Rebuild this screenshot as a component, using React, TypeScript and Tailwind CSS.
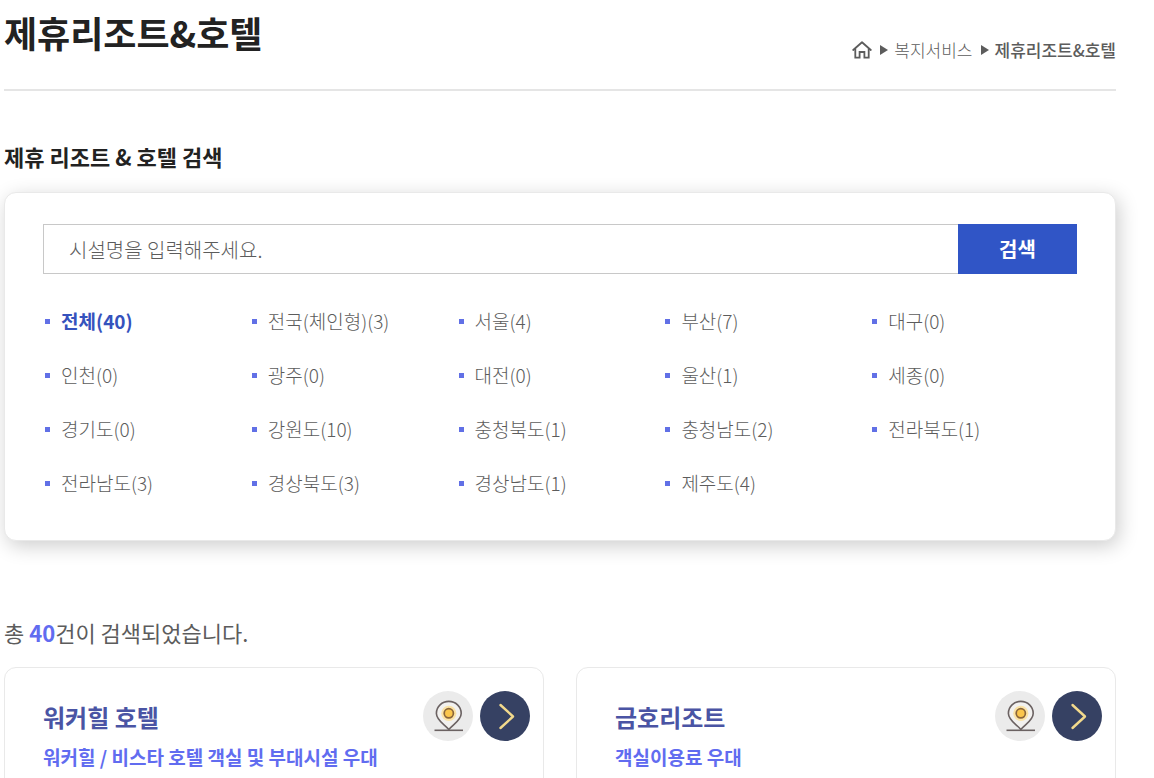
const regions = [
  { name: '전체', count: 40 },
  { name: '전국(체인형)', count: 3 },
  { name: '서울', count: 4 },
  { name: '부산', count: 7 },
  { name: '대구', count: 0 },
  { name: '인천', count: 0 },
  { name: '광주', count: 0 },
  { name: '대전', count: 0 },
  { name: '울산', count: 1 },
  { name: '세종', count: 0 },
  { name: '경기도', count: 0 },
  { name: '강원도', count: 10 },
  { name: '충청북도', count: 1 },
  { name: '충청남도', count: 2 },
  { name: '전라북도', count: 1 },
  { name: '전라남도', count: 3 },
  { name: '경상북도', count: 3 },
  { name: '경상남도', count: 1 },
  { name: '제주도', count: 4 },
];

const facilities = [
  { name: '워커힐 호텔', benefit: '워커힐 / 비스타 호텔 객실 및 부대시설 우대' },
  { name: '금호리조트', benefit: '객실이용료 우대' },
];

function HomeIcon() {
  return (
    <svg viewBox="0 0 20 18" className="h-[18px] w-5" fill="none" stroke="#5c5c5c" strokeWidth="1.8" strokeLinejoin="round" strokeLinecap="round">
      <path d="M1.2 9 L10 1.3 L18.8 9" />
      <path d="M3.3 7.8 V16.6 H7.6 V11 H12.4 V16.6 H16.7 V7.8" strokeLinejoin="miter" />
    </svg>
  );
}

function TriangleIcon() {
  return (
    <svg viewBox="0 0 8 10" className="h-[10px] w-2" fill="#5c5c5c">
      <path d="M0 0 L8 5 L0 10 Z" />
    </svg>
  );
}

function MapIcon() {
  return (
    <svg viewBox="0 0 50 50" className="size-[50px]" fill="none">
      <circle cx="25" cy="25" r="25" fill="#ebebeb" />
      <path d="M25.8 38.5 C22.5 34 13.4 29.5 13.4 22.4 A12.4 12 0 0 1 38.2 22.4 C38.2 29.5 29.1 34 25.8 38.5 Z" fill="#f2f1ef" stroke="#6b6262" strokeWidth="1.6" />
      <circle cx="25.8" cy="22.3" r="7.6" fill="#fbe3a6" />
      <circle cx="25.8" cy="22.3" r="4.6" fill="#fbc64c" stroke="#8a653a" strokeWidth="1.7" />
      <path d="M11.5 39.3 H40" stroke="#6b6262" strokeWidth="1.6" />
    </svg>
  );
}

function ArrowIcon() {
  return (
    <svg viewBox="0 0 50 50" className="size-[50px]" fill="none">
      <circle cx="25" cy="25" r="25" fill="#364163" />
      <path d="M20.5 14 L33 25.5 L20.5 37" stroke="#f2d98c" strokeWidth="2.4" strokeLinecap="round" strokeLinejoin="round" />
    </svg>
  );
}

export default function App() {
  return (
    <main className="h-screen overflow-hidden bg-white pr-[38px] pl-1 font-['Noto_Sans_CJK_KR','Noto_Sans',sans-serif] text-[#5c5c5c]">
      <header className="flex items-start justify-between border-b-2 border-[#e5e5e5] pt-1.5 pb-[27px]">
        <h1 className="text-[36px] leading-[52px] font-bold text-[#222]">제휴리조트&amp;호텔</h1>
        <nav aria-label="현재 위치" className="mt-8 flex items-center text-[17px] leading-6">
          <a href="#home" aria-label="홈"><HomeIcon /></a>
          <span className="mr-1.5 ml-2"><TriangleIcon /></span>
          <a href="#welfare" className="font-light">복지서비스</a>
          <span className="mr-1.5 ml-2"><TriangleIcon /></span>
          <a href="#resort" aria-current="page" className="font-medium">제휴리조트&amp;호텔</a>
        </nav>
      </header>

      <section>
        <h2 className="mt-[49px] text-[22px] leading-8 font-bold text-[#222]">제휴 리조트 &amp; 호텔 검색</h2>
        <div className="mt-5 rounded-[12px] border border-[#e9e9e9] bg-white px-[38px] pt-[31px] pb-[43px] shadow-[3px_5px_20px_rgba(0,0,0,0.2)]">
          <form className="flex" onSubmit={(e) => e.preventDefault()}>
            <input
              type="text"
              aria-label="시설명"
              placeholder="시설명을 입력해주세요."
              className="h-[50px] min-w-0 flex-1 border border-r-0 border-[#c8c8c8] px-[25px] text-[20px] font-light outline-none placeholder:text-[#5c5c5c] placeholder:opacity-100"
            />
            <button type="submit" className="h-[50px] w-[119px] bg-[#3055c6] text-[20px] font-bold text-white">검색</button>
          </form>
          <ul className="mt-[33px] grid grid-cols-5 gap-y-[26px]">
            {regions.map((r, i) => (
              <li key={r.name} className="flex items-center pl-0.5">
                <span className="mr-[11px] size-[5px] bg-[#6170e6]" />
                <a
                  href="#region"
                  className={i === 0 ? 'text-[19px] leading-7 font-bold text-[#3552bd]' : 'text-[19px] leading-7 font-light'}
                >
                  {r.name}({r.count})
                </a>
              </li>
            ))}
          </ul>
        </div>
      </section>

      <section>
        <p className="mt-[75px] text-[22px] leading-8">
          총 <strong className="font-bold text-[#616cf0]">40</strong>건이 검색되었습니다.
        </p>
        <div className="mt-[19px] grid grid-cols-2 gap-8">
          {facilities.map((f) => (
            <article key={f.name} className="h-[240px] rounded-[12px] border border-[#e9e9e9] pt-[23px] pr-[13px] pl-[38px]">
              <div className="flex justify-between">
                <div className="pt-2">
                  <h3 className="text-[24px] leading-9 font-bold text-[#4a54a4]">{f.name}</h3>
                  <p className="mt-2 text-[19px] leading-7 font-bold text-[#616cf0]">{f.benefit}</p>
                </div>
                <div className="flex items-start gap-[7px]">
                  <a href="#map" aria-label={`${f.name} 지도`}><MapIcon /></a>
                  <a href="#detail" aria-label={`${f.name} 상세보기`}><ArrowIcon /></a>
                </div>
              </div>
            </article>
          ))}
        </div>
      </section>
    </main>
  );
}
